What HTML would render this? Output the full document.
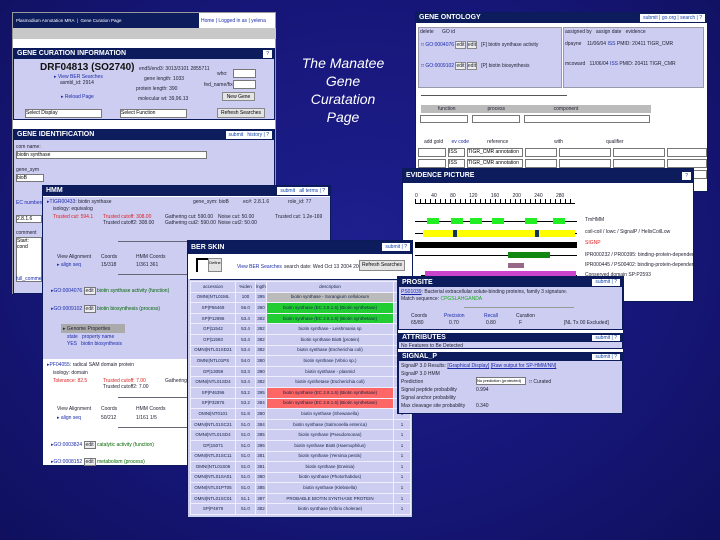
<!DOCTYPE html><html><head><style>
*{margin:0;padding:0;box-sizing:border-box}
body{width:720px;height:540px;overflow:hidden;background:radial-gradient(ellipse at 50% 45%,#1e1e8e 0%,#161678 60%,#10105e 100%);font-family:"Liberation Sans",sans-serif;position:relative}
.p{position:absolute;background:#cdcdf2;border:1px solid #0b1a5a}
.h{background:#0c1c5c;color:#fff;font-size:7px;font-weight:bold;height:10px;line-height:10px;padding-left:3px;position:relative}
.h .b{position:absolute;right:2px;top:1px;height:8px;background:#fff;color:#14a;font-size:5px;line-height:8px;padding:0 3px;font-weight:normal}
.t{position:absolute;font-size:5px;color:#223;white-space:nowrap}
.bl{color:#1a2aaa}
.in{position:absolute;background:#fff;border:1px solid #777}
.btn{position:absolute;background:#e4e4e4;border:1px solid #888;font-size:5px;text-align:center;line-height:8px}
table{border-collapse:collapse}
.ber td{border:1px solid #eef;height:10.6px;max-height:10.6px;line-height:8px;font-size:4.5px;color:#124;text-align:center;white-space:nowrap;overflow:hidden;padding:0}
.ln{position:absolute;height:1px;background:#667}
</style></head><body>

<div style="position:absolute;left:283px;top:54px;width:120px;text-align:center;color:#fff;font-style:italic;font-size:14px;line-height:18px">The Manatee<br>Gene<br>Curatation<br>Page</div>

<div style="position:absolute;left:12px;top:12px;width:264px;height:282px;background:#fff;border:1px solid #999">
 <div style="position:absolute;left:0;top:0;width:186px;height:15px;background:#0c1c5c;color:#fff;font-size:4.5px;line-height:15px;padding-left:3px">Plasmodium Annotation MRA &nbsp;|&nbsp; Gene Curation Page</div>
 <div class="t bl" style="left:188px;top:5px">Home | Logged in as | yelena</div>
 <div style="position:absolute;left:0;top:15px;width:263px;height:11px;background:#c8c8c8"></div>
 <div class="p" style="left:0;top:35px;width:262px;height:72px">
  <div class="h">GENE CURATION INFORMATION<span class="b">?</span></div>
  <div class="t" style="left:26px;top:13px;font-size:10px;font-weight:bold;color:#111">DRF04813 (SO2740)</div>
  <div class="t bl" style="left:40px;top:25px">▸ View BER Searches</div>
  <div class="t" style="left:46px;top:31px">asmbl_id: 2914</div>
  <div class="t bl" style="left:47px;top:45px">▸ Reload Page</div>
  <div class="t" style="left:125px;top:17px">end5/end3: 3013/3101 2855711</div>
  <div class="t" style="left:130px;top:27px">gene length: 1033</div>
  <div class="t" style="left:122px;top:37px">protein length: 390</div>
  <div class="t" style="left:124px;top:47px">molecular wt: 39,96.13</div>
  <div class="t" style="left:203px;top:22px">who: </div><div class="in" style="left:219px;top:20px;width:23px;height:9px"></div>
  <div class="t" style="left:190px;top:33px">fed_name/fixed:</div><div class="in" style="left:219px;top:31px;width:23px;height:9px"></div>
  <div class="btn" style="left:208px;top:43px;width:33px;height:9px">New Gene</div>
  <div class="in" style="left:11px;top:60px;width:77px;height:9px;font-size:5px;line-height:7px">Select Display</div>
  <div class="in" style="left:106px;top:60px;width:67px;height:9px;font-size:5px;line-height:7px">Select Function</div>
  <div class="btn" style="left:203px;top:59px;width:48px;height:10px">Refresh Searches</div>
 </div>
 <div class="p" style="left:0;top:116px;width:262px;height:165px">
  <div class="h">GENE IDENTIFICATION<span class="b">submit &nbsp; history | ?</span></div>
  <div class="t" style="left:2px;top:14px">com name:</div>
  <div class="in" style="left:2px;top:21px;width:191px;height:8px;font-size:5px;line-height:6px">biotin synthase</div>
  <div class="t" style="left:2px;top:37px">gene_sym</div>
  <div class="in" style="left:2px;top:44px;width:28px;height:8px;font-size:5px">bioB</div>
  <div class="t bl" style="left:2px;top:70px">EC number(s)</div>
  <div class="in" style="left:2px;top:85px;width:26px;height:8px;font-size:5px">2.8.1.6</div>
  <div class="t" style="left:2px;top:100px">comment</div>
  <div class="in" style="left:2px;top:107px;width:26px;height:45px;font-size:5px">Start: cond</div>
  <div class="t bl" style="left:2px;top:146px">full_comment</div>
 </div>
</div>

<div class="p" style="left:42px;top:185px;width:289px;height:281px;background:#fff">
 <div class="h">HMM<span class="b">submit &nbsp; all terms | ?</span></div>
 <div style="position:absolute;left:0;top:11px;width:287px;height:162px;background:#cdcdf2"></div>
 <div class="t" style="left:4px;top:13px"><span class="bl">▸TIGR00433</span>: biotin synthase</div>
 <div class="t" style="left:150px;top:13px">gene_sym: bioB</div><div class="t" style="left:200px;top:13px">ec#: 2.8.1.6</div><div class="t" style="left:245px;top:13px">role_id: 77</div>
 <div class="t" style="left:10px;top:20px">isology: equivalog</div>
 <div class="t" style="left:10px;top:28px;color:#d22">Trusted cut: 594.1</div>
 <div class="t" style="left:60px;top:28px;color:#d22">Trusted cutoff: 308.00</div>
 <div class="t" style="left:60px;top:34px">Trusted cutoff2: 308.00</div>
 <div class="t" style="left:122px;top:28px">Gathering cut: 590.00</div><div class="t" style="left:122px;top:34px">Gathering cut2: 590.00</div>
 <div class="t" style="left:175px;top:28px">Noise cut: 50.00</div><div class="t" style="left:175px;top:34px">Noise cut2: 50.00</div>
 <div class="t" style="left:232px;top:28px">Trusted cut: 1.2e-169</div>
 <div class="ln" style="left:75px;top:55px;width:110px"></div>
 <div class="t" style="left:14px;top:68px">View Alignment</div><div class="t" style="left:58px;top:68px">Coords</div><div class="t" style="left:93px;top:68px">HMM Coords</div>
 <div class="t bl" style="left:14px;top:76px">▸ align seq</div><div class="t" style="left:58px;top:76px">15/318</div><div class="t" style="left:93px;top:76px">1/361 361</div>
 <div class="ln" style="left:75px;top:88px;width:110px"></div>
 <div class="t" style="left:8px;top:102px"><span class="bl">▸GO:0004076</span> <span style="border:1px solid #777;background:#eee;padding:0 1px">edit</span> <span style="color:#060">biotin synthase activity (function)</span></div>
 <div class="t" style="left:8px;top:120px"><span class="bl">▸GO:0009102</span> <span style="border:1px solid #777;background:#eee;padding:0 1px">edit</span> <span style="color:#060">biotin biosynthesis (process)</span></div>
 <div style="position:absolute;left:18px;top:138px;width:64px;height:9px;background:#aaa"></div>
 <div class="t" style="left:20px;top:140px">▸ Genome Properties</div>
 <div class="t bl" style="left:24px;top:148px">state &nbsp; property name</div>
 <div class="t bl" style="left:24px;top:155px">YES &nbsp; biotin biosynthesis</div>
 <div class="t" style="left:4px;top:176px"><span class="bl">▸PF04055</span>: radical SAM domain protein</div>
 <div class="t" style="left:10px;top:184px">isology: domain</div>
 <div class="t" style="left:10px;top:192px;color:#d22">Tolerance: 82.5</div><div class="t" style="left:60px;top:192px;color:#d22">Trusted cutoff: 7.00</div><div class="t" style="left:60px;top:198px">Trusted cutoff2: 7.00</div><div class="t" style="left:122px;top:192px">Gathering cut</div>
 <div class="ln" style="left:75px;top:211px;width:110px"></div>
 <div class="t" style="left:14px;top:220px">View Alignment</div><div class="t" style="left:58px;top:220px">Coords</div><div class="t" style="left:93px;top:220px">HMM Coords</div>
 <div class="t bl" style="left:14px;top:229px">▸ align seq</div><div class="t" style="left:58px;top:229px">50/212</div><div class="t" style="left:93px;top:229px">1/161 1/5</div>
 <div class="ln" style="left:75px;top:241px;width:110px"></div>
 <div class="t" style="left:8px;top:256px"><span class="bl">▸GO:0003824</span> <span style="border:1px solid #777;background:#eee;padding:0 1px">edit</span> <span style="color:#060">catalytic activity (function)</span></div>
 <div class="t" style="left:8px;top:273px"><span class="bl">▸GO:0008152</span> <span style="border:1px solid #777;background:#eee;padding:0 1px">edit</span> <span style="color:#060">metabolism (process)</span></div>
</div>

<div class="p" style="left:415px;top:12px;width:293px;height:180px;background:#fff">
 <div class="h">GENE ONTOLOGY<span class="b">submit | go.org | search | ?</span></div>
 <div style="position:absolute;left:2px;top:14px;width:144px;height:61px;border:1px solid #99a;background:#cdcdf2">
  <div class="t" style="left:1px;top:1px">delete &nbsp;&nbsp;&nbsp;&nbsp; GO id</div>
  <div class="t" style="left:2px;top:14px">□ <span class="bl">GO:0004076</span> <span style="background:#eee;border:1px solid #888">edit</span> <span style="background:#eee;border:1px solid #888">edit</span> &nbsp; [F] biotin synthase activity</div>
  <div class="t" style="left:2px;top:35px">□ <span class="bl">GO:0009102</span> <span style="background:#eee;border:1px solid #888">edit</span> <span style="background:#eee;border:1px solid #888">edit</span> &nbsp; [P] biotin biosynthesis</div>
 </div>
 <div style="position:absolute;left:147px;top:14px;width:141px;height:61px;border:1px solid #99a;background:#cdcdf2">
  <div class="t" style="left:1px;top:1px">assigned by &nbsp; assign date &nbsp; evidence</div>
  <div class="t" style="left:1px;top:13px">dpayne &nbsp;&nbsp; 11/06/04 <span class="bl">ISS</span> PMID: 20411 TIGR_CMR</div>
  <div class="t" style="left:1px;top:33px">mcoward &nbsp; 11/06/04 <span class="bl">ISS</span> PMID: 20411 TIGR_CMR</div>
 </div>
 <div class="ln" style="left:5px;top:82px;width:146px;background:#555"></div>
 <div style="position:absolute;left:5px;top:92px;width:230px;height:8px;background:#bbb"></div>
 <div class="t" style="left:22px;top:93px">function &nbsp;&nbsp;&nbsp;&nbsp;&nbsp;&nbsp;&nbsp;&nbsp;&nbsp;&nbsp;&nbsp;&nbsp;&nbsp;&nbsp;&nbsp;&nbsp;&nbsp;&nbsp;&nbsp;&nbsp;&nbsp; process &nbsp;&nbsp;&nbsp;&nbsp;&nbsp;&nbsp;&nbsp;&nbsp;&nbsp;&nbsp;&nbsp;&nbsp;&nbsp;&nbsp;&nbsp;&nbsp;&nbsp;&nbsp;&nbsp;&nbsp;&nbsp;&nbsp;&nbsp;&nbsp;&nbsp;&nbsp;&nbsp;&nbsp;&nbsp;&nbsp;&nbsp;&nbsp;&nbsp; component</div>
 <div class="in" style="left:4px;top:102px;width:48px;height:8px"></div><div class="in" style="left:56px;top:102px;width:48px;height:8px"></div><div class="in" style="left:108px;top:102px;width:126px;height:8px"></div>
 <div class="t" style="left:8px;top:126px">add gold &nbsp;&nbsp;&nbsp;&nbsp; <span class="bl">ev code</span> &nbsp;&nbsp;&nbsp;&nbsp;&nbsp;&nbsp;&nbsp;&nbsp;&nbsp;&nbsp;&nbsp; reference &nbsp;&nbsp;&nbsp;&nbsp;&nbsp;&nbsp;&nbsp;&nbsp;&nbsp;&nbsp;&nbsp;&nbsp;&nbsp;&nbsp;&nbsp;&nbsp;&nbsp;&nbsp;&nbsp;&nbsp;&nbsp;&nbsp;&nbsp;&nbsp;&nbsp;&nbsp;&nbsp;&nbsp;&nbsp;&nbsp;&nbsp; with &nbsp;&nbsp;&nbsp;&nbsp;&nbsp;&nbsp;&nbsp;&nbsp;&nbsp;&nbsp;&nbsp;&nbsp;&nbsp;&nbsp;&nbsp;&nbsp;&nbsp;&nbsp;&nbsp;&nbsp;&nbsp;&nbsp;&nbsp;&nbsp;&nbsp;&nbsp;&nbsp;&nbsp;&nbsp; qualifier</div>
 <div class="in" style="left:2px;top:135px;width:28px;height:9px"></div><div class="in" style="left:32px;top:135px;width:17px;height:9px;font-size:5px">ISS</div><div class="in" style="left:51px;top:135px;width:56px;height:9px;font-size:5px">TIGR_CMR annotation</div><div class="in" style="left:109px;top:135px;width:32px;height:9px"></div><div class="in" style="left:143px;top:135px;width:52px;height:9px"></div><div class="in" style="left:197px;top:135px;width:52px;height:9px"></div><div class="in" style="left:251px;top:135px;width:40px;height:9px"></div>
 <div class="in" style="left:2px;top:146px;width:28px;height:9px"></div><div class="in" style="left:32px;top:146px;width:17px;height:9px;font-size:5px">ISS</div><div class="in" style="left:51px;top:146px;width:56px;height:9px;font-size:5px">TIGR_CMR annotation</div><div class="in" style="left:109px;top:146px;width:32px;height:9px"></div><div class="in" style="left:143px;top:146px;width:52px;height:9px"></div><div class="in" style="left:197px;top:146px;width:52px;height:9px"></div><div class="in" style="left:251px;top:146px;width:40px;height:9px"></div>
 <div class="in" style="left:2px;top:157px;width:28px;height:9px"></div><div class="in" style="left:32px;top:157px;width:17px;height:9px;font-size:5px">ISS</div><div class="in" style="left:51px;top:157px;width:56px;height:9px;font-size:5px">TIGR_CMR annotation</div><div class="in" style="left:109px;top:157px;width:32px;height:9px"></div><div class="in" style="left:143px;top:157px;width:52px;height:9px"></div><div class="in" style="left:197px;top:157px;width:52px;height:9px"></div><div class="in" style="left:251px;top:157px;width:40px;height:9px"></div>
</div>

<div class="p" style="left:402px;top:168px;width:292px;height:134px;background:#fff">
 <div class="h" style="height:14px;line-height:14px">EVIDENCE PICTURE<span class="b" style="top:3px">?</span></div>
 <div style="position:absolute;left:12px;top:34px;width:160px;height:1px;background:#000"></div>
 <div class="t" style="left:12px;top:24px;font-size:5px;word-spacing:12px">0 40 80 120 160 200 240 280</div>
 <div style="position:absolute;left:12px;top:30px;width:160px;height:4px;background:repeating-linear-gradient(90deg,#000 0 1px,transparent 1px 5px)"></div>
 <div style="position:absolute;left:12px;top:52px;width:162px;height:1px;background:#000"></div>
 <div style="position:absolute;left:24px;top:49px;width:12px;height:6px;background:#2e2"></div><div style="position:absolute;left:48px;top:49px;width:12px;height:6px;background:#2e2"></div><div style="position:absolute;left:67px;top:49px;width:12px;height:6px;background:#2e2"></div><div style="position:absolute;left:89px;top:49px;width:12px;height:6px;background:#2e2"></div><div style="position:absolute;left:122px;top:49px;width:12px;height:6px;background:#2e2"></div><div style="position:absolute;left:150px;top:49px;width:12px;height:6px;background:#2e2"></div>
 <div style="position:absolute;left:12px;top:64px;width:162px;height:1px;background:#000"></div>
 <div style="position:absolute;left:20px;top:61px;width:152px;height:7px;background:#ff0"></div>
 <div style="position:absolute;left:50px;top:61px;width:4px;height:7px;background:#135"></div><div style="position:absolute;left:132px;top:61px;width:4px;height:7px;background:#135"></div>
 <div style="position:absolute;left:12px;top:73px;width:162px;height:6px;background:#000"></div>
 <div style="position:absolute;left:12px;top:86px;width:162px;height:1px;background:#000"></div>
 <div style="position:absolute;left:105px;top:83px;width:42px;height:6px;background:#181"></div>
 <div style="position:absolute;left:105px;top:94px;width:16px;height:5px;background:#968"></div>
 <div style="position:absolute;left:18px;top:106px;width:156px;height:1px;background:#000"></div>
 <div style="position:absolute;left:22px;top:102px;width:151px;height:7px;background:#c4c"></div>
 <div class="t" style="left:182px;top:48px">TmHMM</div>
 <div class="t" style="left:182px;top:60px">coil-coil / lowc / SignalP / HelixCoilLow</div>
 <div class="t" style="left:182px;top:71px;color:#d22">SIGNP</div>
 <div class="t" style="left:182px;top:83px">IPR000232 / PR00395: binding-protein-dependent</div>
 <div class="t" style="left:182px;top:93px">IPR000445 / PS00402: binding-protein-dependent</div>
 <div class="t" style="left:182px;top:103px">Conserved domain SP:P2593</div>
</div>

<div class="p" style="left:187px;top:240px;width:226px;height:278px;overflow:hidden">
 <div class="h" style="height:13px;line-height:13px">BER SKIN<span class="b" style="top:2px">submit | ?</span></div>
 <div style="position:absolute;left:0;top:13px;width:224px;height:25px;background:#fff"></div>
 <div style="position:absolute;left:8px;top:17px;width:12px;height:14px;border:2px solid #000;border-right:none;border-bottom:none"></div>
 <div class="btn" style="left:20px;top:17px;width:14px;height:14px;font-size:4px">Define</div>
 <div class="t bl" style="left:49px;top:23px">View BER Searches</div>
 <div class="t" style="left:96px;top:23px">search date: Wed Oct 13 2004 2004</div>
 <div class="btn" style="left:171px;top:19px;width:46px;height:11px">Refresh Searches</div>
 <div style="position:absolute;left:2px;top:38px;width:220px;height:1px;background:#0c1c5c"></div>
 <table class="ber" style="position:absolute;left:2px;top:40px;width:220px;table-layout:fixed">
  <col style="width:45px"><col style="width:20px"><col style="width:11px"><col style="width:127px"><col style="width:17px">
  <tr><td>accession</td><td>%iden</td><td>lngth</td><td>description</td><td></td></tr>
  <tr><td class="bl">OMNI|NTL01ML</td><td>100</td><td>395</td><td style="background:#bbb">biotin synthase - Sorangium cellulosum</td><td>1</td></tr>
  <tr><td class="bl">SP|P56469</td><td>56.0</td><td>380</td><td style="background:#2c3">biotin synthase (EC 2.8.1.6) (Biotin synthetase)</td><td>1</td></tr>
  <tr><td class="bl">SP|P12996</td><td>53.4</td><td>382</td><td style="background:#2c3">biotin synthase (EC 2.8.1.6) (Biotin synthetase)</td><td>1</td></tr>
  <tr><td class="bl">GP|11542</td><td>53.4</td><td>382</td><td>biotin synthase - Leishmania sp</td><td>1</td></tr>
  <tr><td class="bl">GP|11593</td><td>53.4</td><td>382</td><td>biotin synthase BioB (protein)</td><td>1</td></tr>
  <tr><td class="bl">OMNI|NTL01SD21</td><td>53.4</td><td>382</td><td>biotin synthase (Escherichia coli)</td><td>1</td></tr>
  <tr><td class="bl">OMNI|NTL01PS</td><td>54.0</td><td>380</td><td>biotin synthase (Vibrio sp.)</td><td>1</td></tr>
  <tr><td class="bl">GP|13059</td><td>53.3</td><td>390</td><td>biotin synthase - plasmid</td><td>1</td></tr>
  <tr><td class="bl">OMNI|NTL01SD4</td><td>53.4</td><td>382</td><td>biotin synthetase (Escherichia coli)</td><td>1</td></tr>
  <tr><td class="bl">SP|P46396</td><td>53.2</td><td>395</td><td style="background:#f66">biotin synthase (EC 2.8.1.6) (Biotin synthetase)</td><td>1</td></tr>
  <tr><td class="bl">SP|P32876</td><td>53.2</td><td>384</td><td style="background:#f66">biotin synthase (EC 2.8.1.6) (Biotin synthetase)</td><td>1</td></tr>
  <tr><td class="bl">OMNI|NT0101</td><td>51.8</td><td>380</td><td>biotin synthase (Shewanella)</td><td>1</td></tr>
  <tr><td class="bl">OMNI|NTL01SC21</td><td>51.0</td><td>384</td><td>biotin synthase (Salmonella enterica)</td><td>1</td></tr>
  <tr><td class="bl">OMNI|NTL01SD4</td><td>51.0</td><td>385</td><td>biotin synthase (Pseudomonas)</td><td>1</td></tr>
  <tr><td class="bl">GP|15071</td><td>51.0</td><td>395</td><td>biotin synthase BioB (Haemophilus)</td><td>1</td></tr>
  <tr><td class="bl">OMNI|NTL01SC11</td><td>51.0</td><td>381</td><td>biotin synthase (Yersinia pestis)</td><td>1</td></tr>
  <tr><td class="bl">OMNI|NTL01S06</td><td>51.0</td><td>381</td><td>biotin synthase (Erwinia)</td><td>1</td></tr>
  <tr><td class="bl">OMNI|NTL01SA01</td><td>51.0</td><td>380</td><td>biotin synthase (Photorhabdus)</td><td>1</td></tr>
  <tr><td class="bl">OMNI|NTL01PT05</td><td>51.0</td><td>385</td><td>biotin synthase (Klebsiella)</td><td>1</td></tr>
  <tr><td class="bl">OMNI|NTL01SC01</td><td>51.1</td><td>387</td><td>PROBABLE BIOTIN SYNTHASE PROTEIN</td><td>1</td></tr>
  <tr><td class="bl">SP|P4979</td><td>51.0</td><td>382</td><td>biotin synthase (Vibrio cholerae)</td><td>1</td></tr>
 </table>
</div>

<div style="position:absolute;left:397px;top:276px;width:227px;height:138px;background:#fff;border:1px solid #0c1c5c">
 <div class="p" style="left:0;top:0;width:225px;height:53px">
  <div class="h" style="height:9px;line-height:9px">PROSITE<span class="b" style="height:7px;line-height:7px">submit | ?</span></div>
  <div class="t" style="left:2px;top:11px"><span class="bl" style="text-decoration:underline">PS01039</span>: Bacterial extracellular solute-binding proteins, family 3 signature.</div>
  <div class="t" style="left:2px;top:18px">Match sequence: <span style="color:#2a2">CPGSLAHGANDA</span></div>
  <div class="ln" style="left:65px;top:29px;width:110px;background:#999"></div>
  <div class="t" style="left:12px;top:35px">Coords</div><div class="t bl" style="left:45px;top:35px">Precision</div><div class="t bl" style="left:85px;top:35px">Recall</div><div class="t" style="left:117px;top:35px">Curation</div>
  <div class="t" style="left:12px;top:42px">65/80</div><div class="t" style="left:50px;top:42px">0.70</div><div class="t" style="left:87px;top:42px">0.80</div><div class="t" style="left:120px;top:42px">F</div><div class="t" style="left:165px;top:42px">[NL Tx 00 Excluded]</div>
 </div>
 <div class="p" style="left:0;top:56px;width:225px;height:16px">
  <div class="h" style="height:8px;line-height:8px">ATTRIBUTES<span class="b" style="height:6px;line-height:6px">submit | ?</span></div>
  <div class="t" style="left:2px;top:9px">No Features to Be Detected</div>
 </div>
 <div class="p" style="left:0;top:75px;width:225px;height:62px">
  <div class="h" style="height:8px;line-height:8px">SIGNAL_P<span class="b" style="height:6px;line-height:6px">submit | ?</span></div>
  <div class="t" style="left:2px;top:10px">SignalP 3.0 Results: <span class="bl" style="text-decoration:underline">[Graphical Display]</span> <span class="bl" style="text-decoration:underline">[Raw output for SP-HMM/NN]</span></div>
  <div class="t" style="left:2px;top:18px">SignalP 3.0 HMM</div>
  <div class="t" style="left:2px;top:26px">Prediction</div><div class="in" style="left:77px;top:24px;width:50px;height:8px;font-size:4px">No prediction (protected)</div><div class="t" style="left:130px;top:26px">□ Curated</div>
  <div class="t" style="left:2px;top:34px">Signal peptide probability</div><div class="t" style="left:77px;top:34px">0.994</div>
  <div class="t" style="left:2px;top:42px">Signal anchor probability</div>
  <div class="t" style="left:2px;top:50px">Max cleavage site probability</div><div class="t" style="left:77px;top:50px">0.340</div>
 </div>
</div>

</body></html>
